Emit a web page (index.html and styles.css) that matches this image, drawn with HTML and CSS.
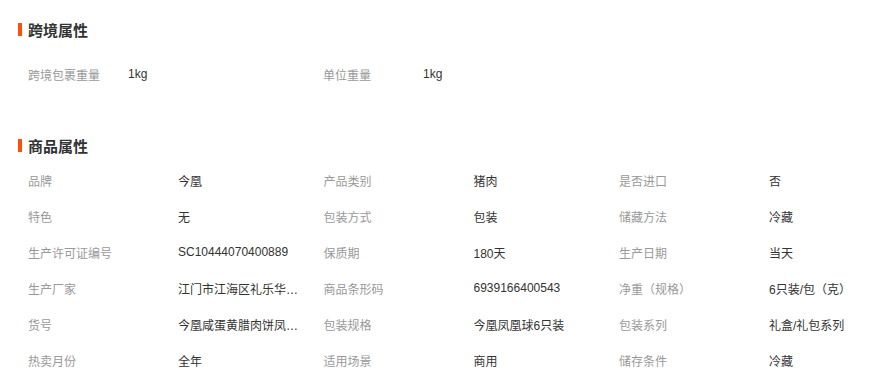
FILE: index.html
```html
<!DOCTYPE html>
<html lang="zh-CN">
<head>
<meta charset="utf-8">
<title>属性</title>
<link rel="stylesheet" href="styles.css">
</head>
<body>
<div class="page">
  <section class="section sec-cross">
    <h2 class="title">跨境属性</h2>
    <div class="cross-row">
      <span class="label l-short">跨境包裹重量</span><span class="value v-wide">1kg</span>
      <span class="label l-short">单位重量</span><span class="value">1kg</span>
    </div>
  </section>
  <section class="section sec-goods">
    <h2 class="title">商品属性</h2>
    <div class="grid">
      <div class="item"><span class="label">品牌</span><span class="value">今凰</span></div>
      <div class="item"><span class="label">产品类别</span><span class="value">猪肉</span></div>
      <div class="item"><span class="label">是否进口</span><span class="value">否</span></div>
      <div class="item"><span class="label">特色</span><span class="value">无</span></div>
      <div class="item"><span class="label">包装方式</span><span class="value">包装</span></div>
      <div class="item"><span class="label">储藏方法</span><span class="value">冷藏</span></div>
      <div class="item"><span class="label">生产许可证编号</span><span class="value">SC10444070400889</span></div>
      <div class="item"><span class="label">保质期</span><span class="value">180天</span></div>
      <div class="item"><span class="label">生产日期</span><span class="value">当天</span></div>
      <div class="item"><span class="label">生产厂家</span><span class="value">江门市江海区礼乐华侨食品厂</span></div>
      <div class="item"><span class="label">商品条形码</span><span class="value">6939166400543</span></div>
      <div class="item"><span class="label">净重（规格）</span><span class="value">6只装/包（克）</span></div>
      <div class="item"><span class="label">货号</span><span class="value">今凰咸蛋黄腊肉饼凤凰球</span></div>
      <div class="item"><span class="label">包装规格</span><span class="value">今凰凤凰球6只装</span></div>
      <div class="item"><span class="label">包装系列</span><span class="value">礼盒/礼包系列</span></div>
      <div class="item"><span class="label">热卖月份</span><span class="value">全年</span></div>
      <div class="item"><span class="label">适用场景</span><span class="value">商用</span></div>
      <div class="item"><span class="label">储存条件</span><span class="value">冷藏</span></div>
    </div>
  </section>
</div>
</body>
</html>
```

FILE: styles.css
```css
html, body {
  margin: 0;
  padding: 0;
  background: #fff;
}

.page {
  font-family: "Liberation Sans", "Noto Sans CJK SC", sans-serif;
  font-size: 12px;
  color: #333;
  padding: 19px 0 0 18px;
}

.title {
  margin: 0;
  display: flex;
  align-items: center;
  height: 20px;
  font-size: 15px;
  font-weight: bold;
  color: #333;
  font-family: "Noto Sans CJK SC", sans-serif;
}

.title::before {
  content: "";
  width: 4px;
  height: 13px;
  background: #ff4f0a;
  margin-right: 6px;
}

.sec-cross .cross-row {
  display: flex;
  align-items: center;
  height: 36px;
  margin-top: 17px;
  padding-left: 10px;
}

.label {
  color: #999;
  flex: none;
}

.value {
  color: #333;
}

.l-short {
  width: 100px;
}

.v-wide {
  width: 195px;
}

.sec-goods {
  margin-top: 43px;
}

.grid {
  margin-top: 7px;
  padding-left: 10px;
  display: grid;
  grid-template-columns: 295.5px 295.5px 250px;
  grid-auto-rows: 36px;
}

.item {
  display: flex;
  align-items: center;
  min-width: 0;
}

.item .label {
  width: 150px;
}

.item .value {
  max-width: 122px;
  overflow: hidden;
  white-space: nowrap;
  text-overflow: ellipsis;
}
```
